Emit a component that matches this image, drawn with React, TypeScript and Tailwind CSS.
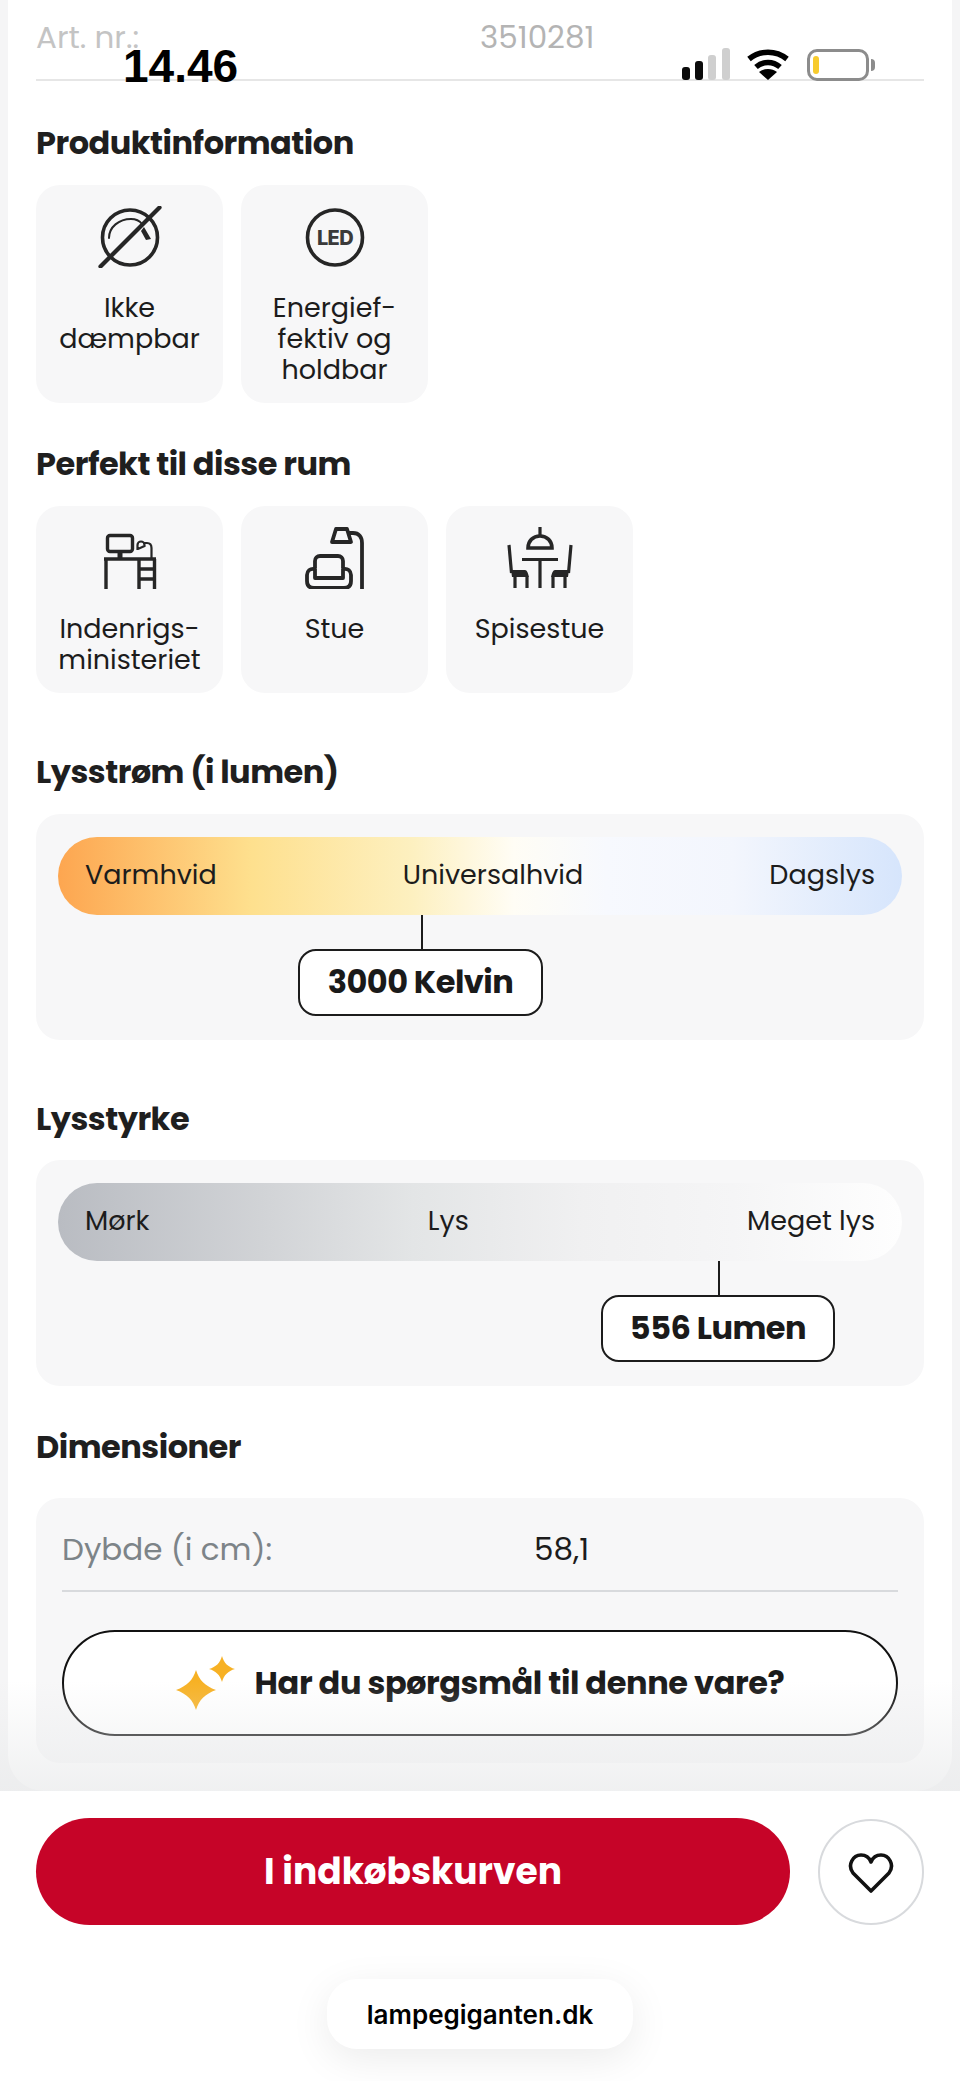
import type { ReactNode } from "react";

const poppins = "font-['Poppins','Inter','Liberation_Sans',sans-serif]";

function DimIcon() {
  return (
    <svg viewBox="0 0 64 62" className="h-[62px] w-[64px]" fill="none" stroke="#262626" strokeLinecap="round">
      <circle cx="32" cy="31.5" r="27.5" strokeWidth="3.6" />
      <path d="M11 32C11 21 21 13 33 13c4 0 8 1 11 5" strokeWidth="2" />
      <path d="M46 21l7 12-5 1-5-9z" fill="#262626" stroke="none" />
      <path d="M2.5 60.5L61.5 1.5" strokeWidth="4.2" />
    </svg>
  );
}

function LedIcon() {
  return (
    <svg viewBox="0 0 64 62" className="h-[62px] w-[64px]" fill="none">
      <circle cx="32" cy="31.5" r="27.5" stroke="#262626" strokeWidth="3.6" />
      <text x="32" y="38.5" textAnchor="middle" fontSize="20" fontWeight="800" letterSpacing="-0.6" fontFamily="Inter, sans-serif" fill="#3a3a3a">LED</text>
    </svg>
  );
}

function DeskIcon() {
  return (
    <svg viewBox="0 0 54 62" className="h-[62px] w-[54px]" fill="none" stroke="#262626" strokeWidth="3.4">
      <rect x="4.5" y="8.5" width="25" height="16" rx="2.5" />
      <path d="M17 24v7" strokeWidth="5" />
      <path d="M1 32h52" />
      <path d="M3 31v31M36 32v30M51.5 32v30M36 42h15M36 52h15" />
      <path d="M34.5 22v-4a3.5 3.5 0 0 1 7 0v1l-6.5 3zM41 16h3c3 0 4.5 2 4.5 5v10" strokeWidth="2.2" />
    </svg>
  );
}

function SofaLampIcon() {
  return (
    <svg viewBox="0 0 60 62" className="h-[62px] w-[60px]" fill="none" stroke="#262626" strokeWidth="3.8" strokeLinejoin="round">
      <path d="M27 15L31 2h11l4 13z" />
      <path d="M44 6h4c6 0 9 4 9 10v46" />
      <path d="M10 41v-7a5 5 0 0 1 5-5h18a5 5 0 0 1 5 5v7" />
      <path d="M10 42c-5-1-8 2-8 6v6c0 5 3 7 7 7h30c4 0 7-2 7-7v-6c0-4-3-7-8-6v9H10z" />
    </svg>
  );
}

function DiningIcon() {
  return (
    <svg viewBox="0 0 66 62" className="h-[62px] w-[66px]" fill="none" stroke="#262626" strokeWidth="3.2">
      <path d="M33 0v10" />
      <path d="M21 21c0-7 5-12 12-12s12 5 12 12z" strokeWidth="3.6" />
      <path d="M15 32.5h36M33 32v29" />
      <path d="M2 18l2.5 28M64 18l-2.5 28" />
      <path d="M4 43h14c2 0 3 3 4 7H5zM62 43H48c-2 0-3 3-4 7h17z" fill="#262626" stroke="none" />
      <path d="M8 50v11M20 50v11M46 50v11M58 50v11" />
    </svg>
  );
}

function InfoCard({ icon, label }: { icon: ReactNode; label: string }) {
  return (
    <div className="flex w-[187px] flex-col items-center rounded-[24px] bg-[#f7f7f8] pt-[21px]">
      <div className="flex h-[62px] items-center justify-center">{icon}</div>
      <div className="mt-[24px] whitespace-pre text-center text-[27px] leading-[31px] text-[#1c1c1c]">{label}</div>
    </div>
  );
}

function Heading({ children, className = "" }: { children: ReactNode; className?: string }) {
  return <h2 className={`text-[32px] leading-[36px] font-bold tracking-[-0.5px] text-[#1f1f1f] ${className}`}>{children}</h2>;
}

function ScaleCard({
  barClass,
  labels,
  tick,
  value,
  pillClass,
  className = "",
}: {
  barClass: string;
  labels: string[];
  tick: string;
  value: string;
  pillClass: string;
  className?: string;
}) {
  return (
    <div className={`h-[226px] rounded-[24px] bg-[#f7f7f8] px-[22px] pt-[23px] ${className}`}>
      <div className={`flex h-[78px] items-center justify-between rounded-full px-[27px] pb-[2px] text-[27px] text-[#1c1c1c] ${barClass}`}>
        {labels.map((l) => (
          <span key={l}>{l}</span>
        ))}
      </div>
      <div className={`h-[34px] w-[2px] bg-[#1c1c1c] ${tick}`} />
      <div className={`flex h-[67px] items-center justify-center rounded-[18px] border-2 border-[#1c1c1c] bg-white pb-[2px] text-[32px] font-bold tracking-[-0.5px] text-[#1a1a1a] ${pillClass}`}>
        {value}
      </div>
    </div>
  );
}

export default function App() {
  return (
    <div className={`relative flex h-[2081px] w-[960px] flex-col overflow-hidden bg-white ${poppins}`}>
      <div className="relative h-[1791px] bg-[#f5f5f6]">
        <div className="mx-[8px] h-[1791px] rounded-b-[36px] bg-white px-[28px]">
          {/* article number row */}
          <div className="flex h-[81px] border-b-2 border-[#e6e6e6] pt-[18px] text-[31px] leading-[38px] text-[#c4c4c4]">
            <span className="w-[444px]">Art. nr.:</span>
            <span className="text-[#b4b4b4]">3510281</span>
          </div>

          <Heading className="mt-[44px]">Produktinformation</Heading>
          <div className="mt-[24px] flex h-[218px] gap-[18px]">
            <InfoCard icon={<DimIcon />} label={"Ikke\ndæmpbar"} />
            <InfoCard icon={<LedIcon />} label={"Energief-\nfektiv og\nholdbar"} />
          </div>

          <Heading className="mt-[43px]">Perfekt til disse rum</Heading>
          <div className="mt-[24px] flex h-[187px] gap-[18px]">
            <InfoCard icon={<DeskIcon />} label={"Indenrigs-\nministeriet"} />
            <InfoCard icon={<SofaLampIcon />} label="Stue" />
            <InfoCard icon={<DiningIcon />} label="Spisestue" />
          </div>

          <Heading className="mt-[61px]">Lysstrøm (i lumen)</Heading>
          <ScaleCard
            className="mt-[24px]"
            barClass="bg-[linear-gradient(90deg,#fda650_0%,#fee08e_23%,#fdf0c0_42%,#fffdf5_54%,#f7f9fe_65%,#f3f6fd_80%,#d6e5fc_100%)]"
            labels={["Varmhvid", "Universalhvid", "Dagslys"]}
            tick="ml-[363px]"
            value="3000 Kelvin"
            pillClass="ml-[240px] w-[245px]"
          />

          <Heading className="mt-[61px]">Lysstyrke</Heading>
          <ScaleCard
            className="mt-[23px]"
            barClass="bg-[linear-gradient(90deg,#b9bcc2_0%,#d2d4d7_25%,#e3e5e6_42%,#f0f0f1_62%,#f5f5f6_80%,#fefefe_100%)]"
            labels={["Mørk", "Lys", "Meget lys"]}
            tick="ml-[660px]"
            value="556 Lumen"
            pillClass="ml-[543px] w-[234px]"
          />

          <Heading className="mt-[43px]">Dimensioner</Heading>
          <div className="mt-[33px] h-[265px] rounded-[24px] bg-[#f7f7f8] px-[26px]">
            <div className="flex h-[94px] items-center border-b-2 border-[#d8dadd] pt-[10px] text-[31px]">
              <span className="w-[472px] text-[#7d8488]">Dybde (i cm):</span>
              <span className="text-[#1c1c1c]">58,1</span>
            </div>
            <div className="mt-[38px] flex h-[106px] items-center justify-center gap-[20px] rounded-full border-2 border-[#111] bg-white text-[32px] font-bold tracking-[-0.4px] text-[#1a1a1a]">
              {/* sparkles */}
              <svg viewBox="0 0 59 54" className="h-[54px] w-[59px]" fill="#f7b124">
                <path d="M20 14c3 10 9 16 20 20-11 4-17 10-20 20-3-10-9-16-20-20 11-4 17-10 20-20z" />
                <path d="M46 0c2 7 6 11 13 13-7 2-11 6-13 13-2-7-6-11-13-13 7-2 11-6 13-13z" />
              </svg>
              Har du spørgsmål til denne vare?
            </div>
          </div>
        </div>

        {/* scroll fade over the panel's lower edge */}
        <div className="pointer-events-none absolute inset-x-0 bottom-0 h-[110px] bg-gradient-to-b from-transparent to-[#e9eaeb]/70" />

        {/* phone status bar drawn over the page */}
        <div className="absolute left-[123px] top-[41px] font-['Liberation_Sans',sans-serif] text-[46px] leading-[50px] font-bold text-black">14.46</div>
        <div className="absolute left-[681px] top-[48px] flex items-start">
          <svg viewBox="0 0 50 32" className="h-[32px] w-[50px]">
            <rect x="1" y="19" width="8" height="13" rx="3" fill="#0b0b0b" />
            <rect x="14" y="13" width="8" height="19" rx="3" fill="#0b0b0b" />
            <rect x="27" y="7" width="8" height="25" rx="3" fill="#cfcfcf" />
            <rect x="41" y="0" width="8" height="32" rx="3" fill="#cfcfcf" />
          </svg>
          <svg viewBox="0 0 42 32" className="ml-[16px] h-[32px] w-[42px]" fill="none" stroke="#000" strokeWidth="5.5">
            <path d="M2 11c11-9 27-9 38 0" />
            <path d="M9 19c7-6 17-6 24 0" />
            <path d="M21 32l-9-8c5-4 13-4 18 0z" fill="#000" stroke="none" />
          </svg>
          <div className="relative ml-[18px] mt-px h-[32px] w-[62px] rounded-[10px] border-[3px] border-[#8c8c8c] bg-white">
            <div className="absolute left-[3px] top-[4px] h-[18px] w-[6px] rounded-[3px] bg-[#f7cb2e]" />
            <div className="absolute -right-[9px] top-[7px] h-[12px] w-[4px] rounded-r-full bg-[#8c8c8c]" />
          </div>
        </div>
      </div>

      <div className="flex-1 bg-white px-[36px] pt-[27px]">
        <div className="flex items-center gap-[28px]">
          <div className="flex h-[107px] w-[754px] items-center justify-center rounded-full bg-[#c60428] text-[36px] font-bold text-white">
            I indkøbskurven
          </div>
          <div className="flex h-[106px] w-[106px] items-center justify-center rounded-full border-2 border-[#d8dadd] bg-white">
            <svg viewBox="0 0 46 42" className="mt-[2px] h-[42px] w-[46px]" fill="none" stroke="#111" strokeWidth="3.6" strokeLinejoin="round">
              <path d="M23 39L5 21C-1 13 5 3 13 3c4 0 8 2 10 7 2-5 6-7 10-7 8 0 14 10 8 18z" />
            </svg>
          </div>
        </div>
        <div className="mx-auto mt-[54px] flex h-[70px] w-[306px] items-center justify-center rounded-[30px] bg-white font-['Inter',sans-serif] text-[26px] font-semibold text-black shadow-[0_10px_40px_rgba(0,0,0,0.08)]">
          lampegiganten.dk
        </div>
      </div>
    </div>
  );
}
